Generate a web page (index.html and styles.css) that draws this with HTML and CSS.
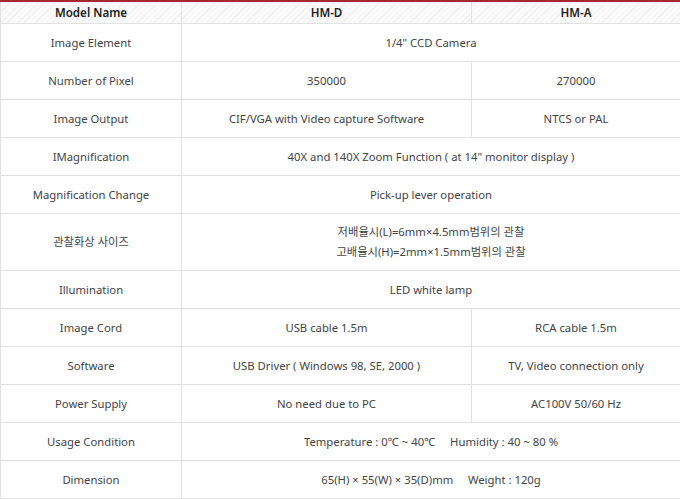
FILE: index.html
```html
<!DOCTYPE html>
<html lang="en">
<head>
<meta charset="utf-8">
<link rel="stylesheet" href="styles.css">
</head>
<body>
<table class="spec">
  <colgroup>
    <col class="c1"><col class="c2"><col class="c3">
  </colgroup>
  <thead>
    <tr class="head">
      <th>Model Name</th>
      <th>HM-D</th>
      <th>HM-A</th>
    </tr>
  </thead>
  <tbody>
    <tr><td>Image Element</td><td colspan="2">1/4" CCD Camera</td></tr>
    <tr><td>Number of Pixel</td><td>350000</td><td>270000</td></tr>
    <tr><td>Image Output</td><td>CIF/VGA with Video capture Software</td><td>NTCS or PAL</td></tr>
    <tr><td>IMagnification</td><td colspan="2">40X and 140X Zoom Function ( at 14" monitor display )</td></tr>
    <tr><td>Magnification Change</td><td colspan="2">Pick-up lever operation</td></tr>
    <tr class="tall"><td>관찰화상 사이즈</td><td colspan="2">저배율시(L)=6mm×4.5mm범위의 관찰<br>고배율시(H)=2mm×1.5mm범위의 관찰</td></tr>
    <tr><td>Illumination</td><td colspan="2">LED white lamp</td></tr>
    <tr><td>Image Cord</td><td>USB cable 1.5m</td><td>RCA cable 1.5m</td></tr>
    <tr><td>Software</td><td>USB Driver ( Windows 98, SE, 2000 )</td><td>TV, Video connection only</td></tr>
    <tr><td>Power Supply</td><td>No need due to PC</td><td>AC100V 50/60 Hz</td></tr>
    <tr><td>Usage Condition</td><td colspan="2">Temperature : 0℃ ~ 40℃ &nbsp;&nbsp;&nbsp; Humidity : 40 ~ 80 %</td></tr>
    <tr><td>Dimension</td><td colspan="2">65(H) × 55(W) × 35(D)mm &nbsp;&nbsp;&nbsp; Weight : 120g</td></tr>
  </tbody>
</table>
</body>
</html>
```

FILE: styles.css
```css
html, body {
  margin: 0;
  padding: 0;
  background: #fff;
}

.spec {
  width: 680px;
  border-collapse: collapse;
  table-layout: fixed;
  font-family: "Noto Sans", "Noto Sans CJK KR", sans-serif;
  font-size: 11.3px;
  color: #444;
  border-top: 2px solid #a8282f;
}

.c1 { width: 181px; }
.c2 { width: 290px; }
.c3 { width: 209px; }

.spec th,
.spec td {
  border: 1px solid #e2e2e2;
  text-align: center;
  vertical-align: middle;
  padding: 0;
  line-height: 18px;
}

.spec th {
  height: 21px;
  font-size: 11.6px;
  font-weight: 600;
  color: #222;
  background-color: #f7f7f7;
  background-image: repeating-linear-gradient(-45deg, #fbfbfb 0, #fbfbfb 3px, #f1f1f1 3px, #f1f1f1 4px);
}

.spec tr.head th { border-top: 0; }

.spec td {
  height: 37px;
}

.spec tr.tall td {
  height: 56px;
  line-height: 20px;
}
```
